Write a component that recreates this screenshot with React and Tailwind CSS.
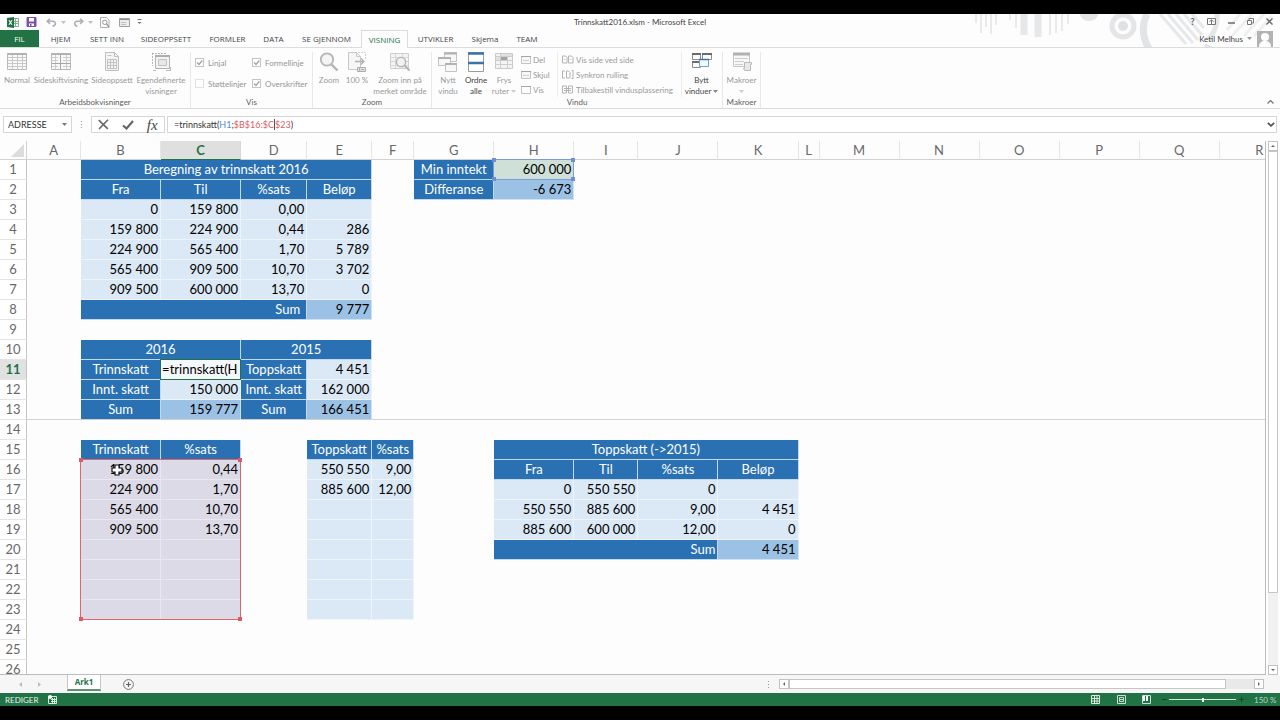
import React from "react";

const COLUMNS = [
  ["A", "w-[54px]"],
  ["B", "w-[80px]"],
  ["C", "w-[80px]"],
  ["D", "w-[66px]"],
  ["E", "w-[65px]"],
  ["F", "w-[42px]"],
  ["G", "w-[80px]"],
  ["H", "w-[80px]"],
  ["I", "w-[64px]"],
  ["J", "w-[80px]"],
  ["K", "w-[80px]"],
  ["L", "w-[21px]"],
  ["M", "w-[80px]"],
  ["N", "w-[80px]"],
  ["O", "w-[80px]"],
  ["P", "w-[80px]"],
  ["Q", "w-[80px]"],
  ["R", "w-[80px]"],
];

const KIND = {
  head: "bg-[#2a71b3] text-white text-center border-[#c3d9ee]",
  sum: "bg-[#2a71b3] text-white text-right pr-[6px] border-[#c3d9ee]",
  sumTight: "bg-[#2a71b3] text-white text-right pr-[2px] border-[#c3d9ee]",
  num: "bg-[#dbe8f5] text-black text-right pr-[2px] border-[#edf4fb]",
  total: "bg-[#9bc1e5] text-black text-right pr-[2px] border-[#cfe1f3]",
  range: "bg-[#dcdae6] text-black text-right pr-[2px] border-[#e9e8f1]",
  source: "bg-[#cfe0d8] text-black text-right pr-[2px] border-[#cfe0d8]",
};

const h = (t, span) => ({ t, k: "head", span });
const n = (t) => ({ t, k: "num" });
const s = (t) => ({ t, k: "total" });
const r = (t) => ({ t, k: "range" });

const SHEET = {
  1: { B: h("Beregning av trinnskatt 2016", 4), G: h("Min inntekt"), H: { t: "600 000", k: "source" } },
  2: { B: h("Fra"), C: h("Til"), D: h("%sats"), E: h("Beløp"), G: h("Differanse"), H: s("-6 673") },
  3: { B: n("0"), C: n("159 800"), D: n("0,00"), E: n("") },
  4: { B: n("159 800"), C: n("224 900"), D: n("0,44"), E: n("286") },
  5: { B: n("224 900"), C: n("565 400"), D: n("1,70"), E: n("5 789") },
  6: { B: n("565 400"), C: n("909 500"), D: n("10,70"), E: n("3 702") },
  7: { B: n("909 500"), C: n("600 000"), D: n("13,70"), E: n("0") },
  8: { B: { t: "Sum", k: "sum", span: 3 }, E: s("9 777") },
  10: { B: h("2016", 2), D: h("2015", 2) },
  11: { B: h("Trinnskatt"), C: { t: "=trinnskatt(H", k: "edit" }, D: h("Toppskatt"), E: n("4 451") },
  12: { B: h("Innt. skatt"), C: n("150 000"), D: h("Innt. skatt"), E: n("162 000") },
  13: { B: h("Sum"), C: s("159 777"), D: h("Sum"), E: s("166 451") },
  15: { B: h("Trinnskatt"), C: h("%sats"), E: h("Toppskatt"), F: h("%sats"), H: h("Toppskatt (->2015)", 4) },
  16: { B: r("159 800"), C: r("0,44"), E: n("550 550"), F: n("9,00"), H: h("Fra"), I: h("Til"), J: h("%sats"), K: h("Beløp") },
  17: { B: r("224 900"), C: r("1,70"), E: n("885 600"), F: n("12,00"), H: n("0"), I: n("550 550"), J: n("0"), K: n("") },
  18: { B: r("565 400"), C: r("10,70"), E: n(""), F: n(""), H: n("550 550"), I: n("885 600"), J: n("9,00"), K: n("4 451") },
  19: { B: r("909 500"), C: r("13,70"), E: n(""), F: n(""), H: n("885 600"), I: n("600 000"), J: n("12,00"), K: n("0") },
  20: { B: r(""), C: r(""), E: n(""), F: n(""), H: { t: "Sum", k: "sumTight", span: 3 }, K: s("4 451") },
  21: { B: r(""), C: r(""), E: n(""), F: n("") },
  22: { B: r(""), C: r(""), E: n(""), F: n("") },
  23: { B: r(""), C: r(""), E: n(""), F: n("") },
};

function Handles({ color }) {
  return (
    <>
      <span className={`absolute -left-[2px] -top-[2px] size-1 ${color}`} />
      <span className={`absolute -right-[2px] -top-[2px] size-1 ${color}`} />
      <span className={`absolute -left-[2px] -bottom-[2px] size-1 ${color}`} />
      <span className={`absolute -right-[2px] -bottom-[2px] size-1 ${color}`} />
    </>
  );
}

function CellExtras({ id }) {
  if (id === "H1")
    return (
      <span className="pointer-events-none absolute -left-px -top-px z-10 h-[21px] w-[81px] border border-[#7d9bd8]">
        <Handles color="bg-[#6f8fd2]" />
      </span>
    );
  if (id === "B16")
    return (
      <>
        <span className="pointer-events-none absolute -left-px -top-px z-10 h-[161px] w-[161px] border border-[#e0646a]">
          <Handles color="bg-[#dd5a60]" />
        </span>
        <svg className="pointer-events-none absolute left-[30px] top-1 z-20 size-3" viewBox="0 0 12 12">
          <path d="M4 1h4v3h3v4H8v3H4V8H1V4h3z" fill="#fff" stroke="#111" strokeWidth="1.2" />
        </svg>
      </>
    );
  return null;
}

function SheetRow({ row }) {
  const data = SHEET[row] || {};
  const cells = [];
  for (let i = 0; i < COLUMNS.length; i++) {
    const col = COLUMNS[i][0];
    const c = data[col];
    const frozen = row === 13 ? "border-b-[#cfcfcf]" : "";
    if (!c) {
      cells.push(<td key={col} className={`border-b p-0 ${row === 13 ? "border-[#d2d2d2]" : "border-transparent"}`} />);
      continue;
    }
    const id = col + row;
    const span = c.span || 1;
    if (c.k === "edit") {
      cells.push(
        <td key={col} className="relative border-r border-b border-white bg-[#f4f8fb] p-0 text-black">
          <span className="block pl-px">{c.t}</span>
          <span className="pointer-events-none absolute -left-px -top-px z-10 h-[21px] w-[81px] border border-[#217346]" />
        </td>
      );
    } else {
      cells.push(
        <td
          key={col}
          colSpan={span}
          className={`relative border-r border-b py-0 pl-0 ${c.k === "head" ? "pr-0" : ""} ${KIND[c.k]} ${frozen}`}
        >
          {c.t}
          <CellExtras id={id} />
        </td>
      );
    }
    i += span - 1;
  }
  const active = row === 11;
  return (
    <tr className="h-5">
      <th
        scope="row"
        className={`border-r border-b border-r-[#c6c6c6] border-b-[#e4e4e4] p-0 text-center ${
          active ? "bg-[#e1e1e1] font-bold text-[#217346]" : "bg-white font-normal text-[#686868]"
        }`}
      >
        {row}
      </th>
      {cells}
    </tr>
  );
}

function Spreadsheet() {
  return (
    <div className="relative min-h-0 min-w-0 flex-1 overflow-hidden border-r border-b border-[#b9bdbb] bg-[#fdfdfd]">
      <table className="w-[1300px] table-fixed border-separate border-spacing-0 whitespace-nowrap text-[13px] leading-[19px]">
        <colgroup>
          <col className="w-[27px]" />
          {COLUMNS.map(([name, w]) => (
            <col key={name} className={w} />
          ))}
        </colgroup>
        <thead>
          <tr className="h-[19px]">
            <td className="border-r border-b border-[#d2d2d2] p-0">
              <svg className="ml-[11px] block size-[13px]" viewBox="0 0 13 13">
                <path d="M13 0v13H0z" fill="#dcdcdc" />
              </svg>
            </td>
            {COLUMNS.map(([name]) => (
              <th
                key={name}
                scope="col"
                className={`border-r border-b p-0 text-center leading-[18px] ${
                  name === "C"
                    ? "border-r-[#d8d8d8] border-b-[#217346] bg-[#dfdfdf] font-bold text-[#217346]"
                    : "border-r-[#e6e6e6] border-b-[#d2d2d2] bg-[#fdfdfd] font-normal text-[#686868]"
                }`}
              >
                {name}
              </th>
            ))}
          </tr>
        </thead>
        <tbody>
          {Array.from({ length: 26 }, (_, i) => (
            <SheetRow key={i} row={i + 1} />
          ))}
        </tbody>
      </table>
    </div>
  );
}

/* ---------- icons ---------- */

function Icon({ children, className = "size-5", box = "0 0 20 20" }) {
  return (
    <svg className={`block shrink-0 ${className}`} viewBox={box} fill="none" aria-hidden="true">
      {children}
    </svg>
  );
}

const GridIcon = () => (
  <Icon>
    <path d="M.5 1.500h19v16H.5z" fill="#f7f7f7" stroke="#a9a9a9" />
    <path d="M.5 2h19" stroke="#a0a0a0" strokeWidth="2" />
    <path d="M1 5.500h18M1 8.500h18M1 11.500h18M1 14.500h18M5.500 3v14M10.500 3v14M15.500 3v14" stroke="#bdbdbd" />
  </Icon>
);
const PageBreakIcon = () => (
  <Icon>
    <path d="M.5 1.500h19v16H.5z" fill="#f7f7f7" stroke="#a9a9a9" />
    <path d="M.5 2h19" stroke="#a0a0a0" strokeWidth="2" />
    <path d="M1 5.500h6M1 8.500h6M1 11.500h6M1 14.500h6M12 5.500h7M12 8.500h7M12 14.500h7M4.500 3v14M15.500 3v14" stroke="#c2c2c2" />
    <path d="M9.500 3v14M1 11.500h18" stroke="#909090" />
  </Icon>
);
const PageLayoutIcon = () => (
  <Icon>
    <path d="M3.500.5h9l4 4v14h-13z" fill="#f3f3f3" stroke="#b0b0b0" />
    <path d="M12.500.5v4h4" stroke="#b0b0b0" />
    <path d="M5.500 7.500h9v9h-9zM5.500 10.500h9M5.500 13.500h9M8.500 7v9M11.500 7v9" stroke="#b3b3b3" />
    <path d="M5.500 3.500h4" stroke="#b8b8b8" />
  </Icon>
);
const CustomViewIcon = () => (
  <Icon>
    <path d="M1 1.500h15M1.500 1v13" stroke="#a5a5a5" strokeDasharray="2 1" />
    <path d="M4.500 3.500h14v13h-14z" fill="#f1f1f1" stroke="#a3a3a3" />
    <path d="M4 4h15" stroke="#9a9a9a" strokeWidth="2" />
    <path d="M7.500 7.500h8v6h-8z" fill="#e2e2e2" stroke="#b4b4b4" />
    <path d="M2 18.500h3M15 18.500h4M19.500 15v4" stroke="#adadad" />
  </Icon>
);
const MagnifierIcon = () => (
  <Icon>
    <circle cx="8" cy="7.500" r="6.200" fill="#f0f2f4" stroke="#a2a2a2" strokeWidth="1.800" />
    <path d="M12.500 12.500l6 6" stroke="#a2a2a2" strokeWidth="2.400" />
  </Icon>
);
const HundredIcon = () => (
  <Icon>
    <path d="M1.500.5h8l4 4v13h-12z" fill="#f5f5f5" stroke="#bcbcbc" />
    <path d="M9.500.5v4h4" stroke="#bcbcbc" />
    <path d="M11 .5h7.500v7" stroke="#c4c4c4" strokeDasharray="2 1" />
    <path d="M8 9.500h9M14 6.500l3 3-3 3" stroke="#9c9c9c" strokeWidth="1.300" />
    <path d="M10.500 15.500h8v4h-8z" fill="#d8d8d8" stroke="#9a9a9a" />
    <path d="M12.500 16.500v2M14.500 17.500h2" stroke="#8a8a8a" />
  </Icon>
);
const ZoomSelectionIcon = () => (
  <Icon>
    <path d="M.5 1.500h18v15H.5z" fill="#f2f2f2" stroke="#c2c2c2" />
    <path d="M.5 5.500h18M.5 9.500h18M.5 13.500h18M5.500 2v14M12.500 2v14" stroke="#cfcfcf" />
    <circle cx="11" cy="10" r="4.600" fill="#eceff1" stroke="#a2a2a2" strokeWidth="1.400" />
    <path d="M14.500 13.500l5 5" stroke="#a2a2a2" strokeWidth="2" />
  </Icon>
);
const NewWindowIcon = () => (
  <Icon>
    <path d="M6.500.5h12v9h-12z" fill="#f6f6f6" stroke="#b5b5b5" />
    <path d="M6 1.500h13" stroke="#a0a0a0" strokeWidth="2" />
    <path d="M.5 5.500h12v8H.5z" fill="#f6f6f6" stroke="#b5b5b5" />
    <path d="M0 6h13" stroke="#a0a0a0" strokeWidth="2" />
    <path d="M7.500 11.500h11v8h-11z" fill="#f6f6f6" stroke="#b5b5b5" />
    <path d="M7 12h12" stroke="#a0a0a0" strokeWidth="2" />
  </Icon>
);
const ArrangeIcon = () => (
  <Icon>
    <path d="M2.500.5h15v19h-15z" fill="#fff" stroke="#9b9b9b" />
    <path d="M2 1.500h16M2 11h16" stroke="#3b74ab" strokeWidth="2.600" />
  </Icon>
);
const FreezeIcon = () => (
  <Icon>
    <path d="M1.500 1.500h17v15h-17z" fill="#f2f2f2" stroke="#bdbdbd" />
    <path d="M1 4.500h18M1 8.500h18M1 12.500h18M6.500 1v16M13.500 1v16" stroke="#c2c2c2" />
    <path d="M7 5h6v3H7z" fill="#8f8f8f" />
    <path d="M7 2h11v2H7zM2 5h4v3H2z" fill="#dcdcdc" />
  </Icon>
);
const SwitchIcon = () => (
  <Icon>
    <path d="M.5 1.500h8v6h-8z" fill="#fff" stroke="#8c8c8c" />
    <path d="M0 2h9" stroke="#6b6b6b" strokeWidth="2" />
    <path d="M10.500 1.500h9v6h-9z" fill="#fff" stroke="#8c8c8c" />
    <path d="M10 2h10" stroke="#6b6b6b" strokeWidth="2" />
    <path d="M.5 9.500h8v6h-8z" fill="#fff" stroke="#8c8c8c" />
    <path d="M0 10h9" stroke="#6b6b6b" strokeWidth="2" />
    <path d="M7.500 7.500h9v7h-9z" fill="#f3f8fd" stroke="#7d9dbd" />
    <path d="M7 7.500h10" stroke="#3c76ae" strokeWidth="1.500" />
  </Icon>
);
const MacroIcon = () => (
  <Icon>
    <path d="M1.500 1.500h16v13h-16z" fill="#f6f6f6" stroke="#b9b9b9" />
    <path d="M1 2h17" stroke="#9f9f9f" strokeWidth="3" />
    <path d="M3 6.500h13M3 9.500h9M3 12.500h8" stroke="#c2c2c2" />
    <path d="M12.500 10.500h7v2h-1v6h-6l-1-2h1z" fill="#e3e3e3" stroke="#aaa" />
  </Icon>
);
const WindowSmall = () => (
  <Icon className="size-[10px]" box="0 0 10 10">
    <path d="M.5 1.500h9v7h-9z" fill="#f7f7f7" stroke="#c2c2c2" />
    <path d="M0 1.500h10" stroke="#a5a5a5" />
    <path d="M2 5.500h6" stroke="#cfcfcf" />
  </Icon>
);
const WindowPlain = () => (
  <Icon className="size-[10px]" box="0 0 10 10">
    <path d="M.5 1.500h9v7h-9z" fill="#fff" stroke="#c2c2c2" />
    <path d="M0 1.500h10" stroke="#a5a5a5" />
  </Icon>
);
const PagesSmall = () => (
  <Icon className="h-[9px] w-3" box="0 0 12 9">
    <path d="M.5 1h3l1.500 1.500V8h-4.500zM6.500 1h3l1.500 1.500V8H6.500z" stroke="#b3b3b3" />
    <path d="M2 4.500h1.500M8 4.500h1.500" stroke="#c6c6c6" />
  </Icon>
);
const PagesSync = () => (
  <Icon className="h-[9px] w-3" box="0 0 12 9">
    <path d="M3 1H.5v7H3M4.500 1h2l1.500 1.500V8H4.500zM11 0v9M9.500.5H11M9.500 8.500H11" stroke="#b3b3b3" />
  </Icon>
);
const PagesReset = () => (
  <Icon className="h-[9px] w-3" box="0 0 12 9">
    <path d="M.5 1h4v7h-4zM6.500 1h4v7h-4zM2 3.500h7M2 5.500h7" stroke="#b3b3b3" />
  </Icon>
);

function Caret({ className = "text-[#777]" }) {
  return (
    <svg className={`inline-block h-[3px] w-[5px] align-middle ${className}`} viewBox="0 0 5 3" aria-hidden="true">
      <path d="M0 0h5L2.500 3z" fill="currentColor" />
    </svg>
  );
}

/* ---------- title bar and tabs ---------- */

function Decoration() {
  return (
    <svg className="pointer-events-none absolute right-0 top-0 h-[33px] w-[310px]" viewBox="970 14 310 33" aria-hidden="true">
      <g stroke="#e9eaec" strokeWidth="2">
        <path d="M976 14v9M981 14v19M986 14v13M991 14v20M996 14v11" />
        <path d="M1010 14v6M1016 14v14M1050 14v21M1056 14v19M1062 14v17M1068 14v10" />
      </g>
      <g stroke="#e6e7e9" strokeWidth="7">
        <path d="M1024 14v21M1038 14v23" />
      </g>
      <path d="M1080 14h18a9 7 0 0 1-18 0z" fill="#e2e3e5" />
      <circle cx="1123" cy="26" r="11" fill="none" stroke="#e4e5e7" strokeWidth="5" />
      <circle cx="1123" cy="26" r="5" fill="#e0e1e3" />
      <path d="M1147 14a34 34 0 0 0 62 31" fill="none" stroke="#e3e4e6" strokeWidth="7" />
      <g stroke="#e7e8ea" strokeWidth="3">
        <path d="M1160 14l26 30M1168 14l25 29M1176 14l22 26M1184 14l18 21M1192 14l12 14" />
      </g>
      <path d="M1217 14c1 10-2 18-9 26" fill="none" stroke="#e5e6e8" strokeWidth="5" />
      <g stroke="#eeeff0" strokeWidth="3">
        <path d="M1227 30l13-16M1232 36l20-22M1244 36l20-22M1254 36l18-20" />
      </g>
    </svg>
  );
}

function TitleBar() {
  return (
    <div className="relative flex h-4 items-center justify-between px-1">
      <div className="flex w-[340px] items-center">
        <span className="ml-[3px] flex w-[19px]">
          <Icon className="h-[11px] w-3" box="0 0 12 11">
            <path d="M6 1.500h5.500v8H6M8.500 2v7M6 4.500h5M6 6.500h5" stroke="#7fae91" />
            <path d="M0 1l7-1v11l-7-1z" fill="#217346" />
            <path d="M2 3.300l3 4.400M5 3.300L2 7.700" stroke="#fff" strokeWidth="1.100" />
          </Icon>
        </span>
        <button aria-label="Lagre" className="w-5">
          <Icon className="h-[10px] w-[11px]" box="0 0 11 10">
            <path d="M1 .5h9v9H1z" fill="#7a54a6" stroke="#7a54a6" />
            <path d="M3 1h5v3.500H3zM3 6.500h5V9H3z" fill="#fff" />
            <path d="M4 7h1.500v2H4z" fill="#7a54a6" />
          </Icon>
        </button>
        <button aria-label="Angre" className="flex w-[27px] items-center gap-1">
          <Icon className="h-[9px] w-[11px]" box="0 0 11 9">
            <path d="M4 .8L1.200 3.300 4 6M1.500 3.300h5c4 0 3.600 4.700 0 4.700" stroke="#a9adb5" strokeWidth="1.500" />
          </Icon>
          <Caret className="text-[#c0c0c0]" />
        </button>
        <button aria-label="Gjør om" className="flex w-[27px] items-center gap-1">
          <Icon className="h-[9px] w-[11px]" box="0 0 11 9">
            <path d="M7 .8l2.800 2.500L7 6M9.500 3.300h-5c-4 0-3.600 4.700 0 4.700" stroke="#a9adb5" strokeWidth="1.500" />
          </Icon>
          <Caret className="text-[#c0c0c0]" />
        </button>
        <button aria-label="Forhåndsvisning" className="w-[19px]">
          <Icon className="h-[11px] w-[10px]" box="0 0 10 11">
            <path d="M.5.5h6L9 3v7.500H.5z" stroke="#b0b0b0" />
            <circle cx="4.800" cy="5.300" r="2.200" stroke="#969696" />
            <path d="M6.500 7L9 10" stroke="#969696" strokeWidth="1.300" />
          </Icon>
        </button>
        <button aria-label="Skjema" className="w-[18px]">
          <Icon className="h-[9px] w-[11px]" box="0 0 11 9">
            <path d="M.5.5h10v8H.5z" fill="#ececec" stroke="#a0a0a0" />
            <path d="M1 1.500h9" stroke="#8e8e8e" />
            <path d="M2 4.500h5M2 6.500h5" stroke="#c0c0c0" />
          </Icon>
        </button>
        <button aria-label="Tilpass hurtigverktøylinjen">
          <Icon className="h-[6px] w-[5px]" box="0 0 5 6">
            <path d="M.5.500h4" stroke="#777" />
            <path d="M.5 3h4L2.500 5z" fill="#777" />
          </Icon>
        </button>
      </div>
      <h1 className="text-[8px] leading-[10px] text-[#444]">Trinnskatt2016.xlsm - Microsoft Excel</h1>
      <div className="flex w-[340px] items-center justify-end pb-px text-[#5a5a5a]">
        <button aria-label="Hjelp" className="w-[19px] text-[9px] font-bold leading-[10px]">?</button>
        <button aria-label="Visningsalternativer for bånd" className="flex w-[19px] justify-center">
          <Icon className="h-[7px] w-[9px]" box="0 0 9 7">
            <path d="M.5.5h8v6h-8zM4.500 2v4M2.500 3.500l2-1.500 2 1.500" stroke="#777" />
          </Icon>
        </button>
        <button aria-label="Minimer" className="flex w-[20px] justify-center">
          <Icon className="size-[7px]" box="0 0 7 7">
            <path d="M0 5h7" stroke="#555" strokeWidth="1.300" />
          </Icon>
        </button>
        <button aria-label="Gjenopprett" className="flex w-[19px] justify-center">
          <Icon className="size-[7px]" box="0 0 7 7">
            <path d="M.5 2.500h4v4h-4zM2 2V.5h4.500V5H5" stroke="#777" />
          </Icon>
        </button>
        <button aria-label="Lukk" className="-mr-[3px] flex w-[19px] justify-center">
          <Icon className="size-[7px]" box="0 0 7 7">
            <path d="M.5.5l6 6M6.500.5l-6 6" stroke="#666" strokeWidth="1.300" />
          </Icon>
        </button>
      </div>
    </div>
  );
}

const TABS = [
  ["HJEM", "w-[43px]"],
  ["SETT INN", "w-[50px]"],
  ["SIDEOPPSETT", "w-[68px]"],
  ["FORMLER", "w-[55px]"],
  ["DATA", "w-[37px]"],
  ["SE GJENNOM", "w-[69px]"],
  ["VISNING", "w-[47px]"],
  ["UTVIKLER", "w-[55px]"],
  ["Skjema", "w-11"],
  ["TEAM", "w-10"],
];

function RibbonTabs() {
  return (
    <nav className="relative flex h-[18px] items-stretch border-b border-[#dcdcdc] font-['Open_Sans','Noto_Sans',sans-serif] text-[8px] text-[#444]">
      <button className="w-[39px] bg-[#217346] text-white">FIL</button>
      {TABS.map(([name, w]) =>
        name === "VISNING" ? (
          <button key={name} className={`${w} -mb-px whitespace-nowrap border border-b-0 border-[#dcdcdc] bg-[#fdfdfe] text-[#217346]`}>
            {name}
          </button>
        ) : (
          <button key={name} className={`${w} whitespace-nowrap`}>
            {name}
          </button>
        )
      )}
      <button className="ml-auto mr-[7px] flex items-center gap-1 whitespace-nowrap font-[Lato,sans-serif]">
        <span>Ketil Melhus</span>
        <Caret className="text-[#999]" />
        <Icon className="ml-px size-4" box="0 0 16 16">
          <path d="M0 0h16v16H0z" fill="#b2b3b5" />
          <circle cx="8" cy="6" r="4" fill="#fff" />
          <path d="M2 16c0-5 3-6 6-6s6 1 6 6z" fill="#fff" />
        </Icon>
      </button>
    </nav>
  );
}

/* ---------- ribbon ---------- */

function Big({ icon, lines, w, on, caret }) {
  return (
    <button className={`${w} flex shrink-0 flex-col items-center gap-[3px] ${on ? "text-[#444]" : "text-[#999]"}`}>
      <span className={on ? "" : "opacity-80"}>{icon}</span>
      <span className="whitespace-nowrap text-center leading-[11px]">
        {lines.map((l, i) => (
          <span key={l + i} className="block">
            {l}
            {caret && i === lines.length - 1 && (
              <>
                {l && " "}
                <Caret className={on ? "text-[#888]" : "text-[#ccc]"} />
              </>
            )}
          </span>
        ))}
      </span>
    </button>
  );
}

function Small({ icon, label }) {
  return (
    <button className="flex h-[15px] items-center gap-[2px] whitespace-nowrap text-[#999]">
      {icon}
      <span>{label}</span>
    </button>
  );
}

function Check({ label, checked }) {
  return (
    <label className="flex h-[21px] items-center gap-1 whitespace-nowrap text-[#959595]">
      <span className="relative flex">
        <input
          type="checkbox"
          defaultChecked={checked}
          className={`peer size-[9px] appearance-none border bg-white ${checked ? "border-[#c4c4c4]" : "border-[#e2e2e2]"}`}
        />
        <svg className="pointer-events-none absolute inset-0 hidden size-[9px] peer-checked:block" viewBox="0 0 9 9">
          <path d="M2 4.500l2 2L7.300 2.500" fill="none" stroke="#a0a0a0" strokeWidth="1.200" />
        </svg>
      </span>
      {label}
    </label>
  );
}

function Group({ label, w, children }) {
  return (
    <section aria-label={label} className={`${w} flex shrink-0 flex-col justify-between border-r border-[#e8e8e8]`}>
      <div className="flex flex-1 items-start">{children}</div>
      <div className="text-center leading-[11px] text-[#5c5c5c]">{label}</div>
    </section>
  );
}

function Ribbon() {
  return (
    <div className="flex h-[61px] border-b border-[#dcdcdc] pt-1 text-[8px]">
      <Group label="Arbeidsbokvisninger" w="w-[191px]">
        <Big icon={<GridIcon />} lines={["Normal"]} w="w-[34px]" />
        <Big icon={<PageBreakIcon />} lines={["Sideskiftvisning"]} w="w-[54px]" />
        <Big icon={<PageLayoutIcon />} lines={["Sideoppsett"]} w="w-12" />
        <Big icon={<CustomViewIcon />} lines={["Egendefinerte", "visninger"]} w="w-[50px]" />
      </Group>
      <Group label="Vis" w="w-[122px]">
        <div className="grid grid-cols-[57px_auto] pl-1">
          <Check label="Linjal" checked />
          <Check label="Formellinje" checked />
          <Check label="Støttelinjer" />
          <Check label="Overskrifter" checked />
        </div>
      </Group>
      <Group label="Zoom" w="w-[119px]">
        <Big icon={<MagnifierIcon />} lines={["Zoom"]} w="ml-[2px] w-7" />
        <Big icon={<HundredIcon />} lines={["100 %"]} w="w-7" />
        <Big icon={<ZoomSelectionIcon />} lines={["Zoom inn på", "merket område"]} w="w-[58px]" />
      </Group>
      <Group label="Vindu" w="w-[291px]">
        <Big icon={<NewWindowIcon />} lines={["Nytt", "vindu"]} w="ml-[2px] w-7" />
        <Big icon={<ArrangeIcon />} lines={["Ordne", "alle"]} w="w-7" on />
        <Big icon={<FreezeIcon />} lines={["Frys", "ruter"]} w="w-7" caret />
        <div className="flex w-10 flex-col border-r border-[#ececec] pl-[3px]">
          <Small icon={<WindowSmall />} label="Del" />
          <Small icon={<WindowSmall />} label="Skjul" />
          <Small icon={<WindowPlain />} label="Vis" />
        </div>
        <div className="flex w-[124px] flex-col border-r border-[#ececec] pl-1">
          <Small icon={<PagesSmall />} label="Vis side ved side" />
          <Small icon={<PagesSync />} label="Synkron rulling" />
          <Small icon={<PagesReset />} label="Tilbakestill vindusplassering" />
        </div>
        <Big icon={<SwitchIcon />} lines={["Bytt", "vinduer"]} w="w-[39px]" on caret />
      </Group>
      <Group label="Makroer" w="w-[38px]">
        <Big icon={<MacroIcon />} lines={["Makroer", ""]} w="w-[37px]" caret />
      </Group>
      <button aria-label="Skjul båndet" className="mb-1 ml-auto mr-[6px] self-end">
        <Icon className="h-1 w-[7px]" box="0 0 7 4">
          <path d="M.5 3.500l3-3 3 3" stroke="#777" strokeWidth="1.300" />
        </Icon>
      </button>
    </div>
  );
}

function FormulaBar() {
  return (
    <div className="flex items-stretch px-[3px] pb-2 pt-[7px] text-[9px] text-[#333]">
      <div className="flex h-[17px] w-[69px] items-center border border-[#d6d6d6] bg-white pr-1">
        <input aria-label="Navneboks" defaultValue="ADRESSE" className="min-w-0 flex-1 bg-transparent pl-1 outline-none" />
        <button aria-label="Velg navn" className="flex">
          <Caret />
        </button>
      </div>
      <div className="flex w-[19px] items-center justify-center">
        <Icon className="h-2 w-px" box="0 0 1 8">
          <path d="M0 0h1v1H0zM0 3h1v1H0zM0 6h1v1H0z" fill="#999" />
        </Icon>
      </div>
      <div className="flex h-[17px] w-[74px] items-center justify-around border border-[#d6d6d6] bg-white">
        <button aria-label="Avbryt">
          <Icon className="size-[11px]" box="0 0 11 11">
            <path d="M.8 1.200l9 8.600M10 .8L1 10" stroke="#666" strokeWidth="1.600" />
          </Icon>
        </button>
        <button aria-label="Skriv inn">
          <Icon className="h-[10px] w-3" box="0 0 12 10">
            <path d="M1 5.500l3.500 3L11 1" stroke="#666" strokeWidth="2.200" />
          </Icon>
        </button>
        <button aria-label="Sett inn funksjon" className="font-['Liberation_Serif',serif] text-[15px] italic leading-[14px] text-[#444]">
          fx
        </button>
      </div>
      <div className="ml-[2px] flex h-[17px] flex-1 items-center border border-[#d6d6d6] bg-white">
        <div
          role="textbox"
          aria-label="Formellinje"
          contentEditable
          suppressContentEditableWarning
          className="flex-1 whitespace-nowrap pl-[6px] outline-none"
        >
          =trinnskatt(<span className="text-[#4a8fd6]">H1</span>;
          <span className="text-[#e0605f]">
            $B$16:$C<span className="border-l border-[#555]">$23</span>
          </span>
          )
        </div>
        <button aria-label="Utvid formellinjen" className="pr-px">
          <Icon className="h-[5px] w-2" box="0 0 8 5">
            <path d="M.8.8L4 3.800 7.200.8" stroke="#555" strokeWidth="1.800" />
          </Icon>
        </button>
      </div>
    </div>
  );
}

/* ---------- scroll bars, sheet tabs and status ---------- */

function ScrollButton({ label, d }) {
  return (
    <button aria-label={label} className="flex size-[10px] shrink-0 items-center justify-center border border-[#c2c2c2] bg-white">
      <svg className="size-1" viewBox="0 0 4 4">
        <path d={d} fill="#666" />
      </svg>
    </button>
  );
}

function VerticalScroll() {
  return (
    <div className="ml-[2px] mr-[2px] flex w-[10px] flex-col bg-[#f1f1f1]">
      <ScrollButton label="Rull opp" d="M0 3h4L2 1z" />
      <div className="flex-1">
        <div className="h-[86%] border border-[#c6c6c6] bg-white" />
      </div>
      <ScrollButton label="Rull ned" d="M0 1h4L2 3z" />
    </div>
  );
}

function SheetTabs() {
  return (
    <div className="flex h-[18px] items-center bg-[#f5f6f5] text-[8px]">
      <button aria-label="Forrige ark" className="ml-[18px] w-[19px]">
        <Icon className="size-[5px]" box="0 0 5 5">
          <path d="M4 0v5L1 2.500z" fill="#bdbdbd" />
        </Icon>
      </button>
      <button aria-label="Neste ark" className="w-[30px]">
        <Icon className="size-[5px]" box="0 0 5 5">
          <path d="M1 0v5l3-2.500z" fill="#bdbdbd" />
        </Icon>
      </button>
      <button className="-mt-px h-[17px] w-[34px] self-start border-x border-b-2 border-x-[#c6c6c6] border-b-[#5f8f76] bg-white pt-px font-['Open_Sans',sans-serif] font-bold text-[#217346]">
        Ark1
      </button>
      <button aria-label="Nytt ark" className="ml-[22px]">
        <Icon className="size-[11px]" box="0 0 11 11">
          <circle cx="5.500" cy="5.500" r="4.900" stroke="#777" />
          <path d="M5.500 3v5M3 5.500h5" stroke="#666" strokeWidth="1.200" />
        </Icon>
      </button>
      <div className="ml-auto flex w-[40%] min-w-0 items-center pr-4">
        <Icon className="mr-[10px] h-[7px] w-px" box="0 0 1 7">
          <path d="M0 0h1v1H0zM0 3h1v1H0zM0 6h1v1H0z" fill="#999" />
        </Icon>
        <div className="flex h-[10px] flex-1 bg-[#e9e9e9]">
          <ScrollButton label="Rull til venstre" d="M3 0v4L1 2z" />
          <div className="flex-1">
            <div className="h-full w-[94%] border border-[#c6c6c6] bg-white" />
          </div>
          <ScrollButton label="Rull til høyre" d="M1 0v4l2-2z" />
        </div>
      </div>
    </div>
  );
}

function StatusBar() {
  return (
    <footer className="flex h-[13px] items-center bg-[#217346] text-[8px] text-[#e6f2ea]">
      <span className="ml-[5px] w-[43px]">REDIGER</span>
      <button aria-label="Spill inn makro">
        <Icon className="size-[9px]" box="0 0 9 9">
          <path d="M.5 1.500h8v7h-8zM3 4.500h5M3 6.500h5M4.500 3v5M6.500 3v5" stroke="#d6eadd" />
          <circle cx="2" cy="2" r="2" fill="#fff" />
        </Icon>
      </button>
      <div className="ml-auto flex items-center">
        <button aria-label="Normal visning" className="w-[26px]">
          <Icon className="size-[9px]" box="0 0 9 9">
            <path d="M.5.5h8v8h-8zM.5 3.500h8M.5 6h8M3.500.5v8M6 .5v8" stroke="#d6eadd" />
          </Icon>
        </button>
        <button aria-label="Sideoppsettvisning" className="w-[25px]">
          <Icon className="size-[9px]" box="0 0 9 9">
            <path d="M.5.5h8v8h-8zM2.500 2.500h4v4h-4zM3 4.500h3" stroke="#c6dfd0" />
          </Icon>
        </button>
        <button aria-label="Sideskiftvisning" className="w-5">
          <Icon className="size-[9px]" box="0 0 9 9">
            <path d="M.5.5h8v8h-8z" stroke="#c6dfd0" />
            <path d="M1 1h2v5H1zM4 1h2v5H4z" fill="#fff" />
          </Icon>
        </button>
        <button aria-label="Zoom ut" className="flex w-[7px]">
          <Icon className="size-[5px]" box="0 0 5 5">
            <path d="M0 2.500h5" stroke="#0f4d2a" />
          </Icon>
        </button>
        <input
          type="range"
          aria-label="Zoom"
          min="0"
          max="100"
          defaultValue="50"
          className="h-px w-[67px] appearance-none bg-[#d6eadd] [&::-webkit-slider-thumb]:h-1 [&::-webkit-slider-thumb]:w-[2px] [&::-webkit-slider-thumb]:appearance-none [&::-webkit-slider-thumb]:bg-white"
        />
        <button aria-label="Zoom inn" className="ml-[3px] flex w-[15px]">
          <Icon className="size-[5px]" box="0 0 5 5">
            <path d="M0 2.500h5M2.500 0v5" stroke="#0f4d2a" />
          </Icon>
        </button>
        <span className="w-[26px] text-[#b9d6c5]">150 %</span>
      </div>
    </footer>
  );
}

export default function App() {
  return (
    <div className="flex h-screen flex-col overflow-hidden bg-black py-[14px] font-[Lato,'Liberation_Sans',sans-serif]">
      <div className="flex min-h-0 flex-1 flex-col bg-[#fdfdfe]">
        <header className="relative">
          <Decoration />
          <TitleBar />
          <RibbonTabs />
          <Ribbon />
          <FormulaBar />
        </header>
        <main className="flex min-h-0 flex-1">
          <Spreadsheet />
          <VerticalScroll />
        </main>
        <SheetTabs />
        <StatusBar />
      </div>
    </div>
  );
}
